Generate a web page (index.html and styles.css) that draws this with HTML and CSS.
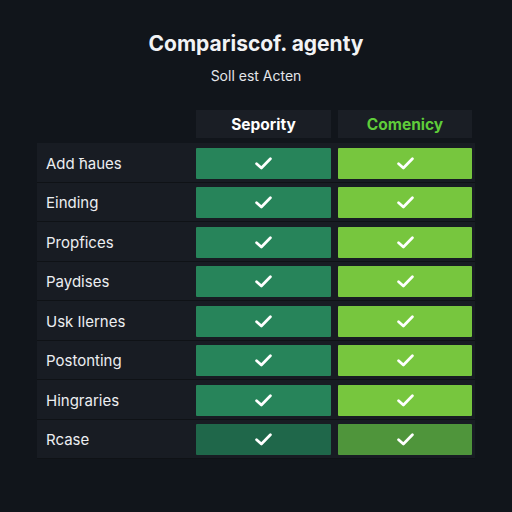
FILE: index.html
```html
<!DOCTYPE html>
<html lang="en">
<head>
    <meta charset="UTF-8">
    <meta name="viewport" content="width=device-width, initial-scale=1.0">
    <title>Comparison</title>
    <link rel="stylesheet" href="styles.css">
</head>
<body>
    <div class="page">
        <h1 class="title">Compariscof. agenty</h1>
        <p class="subtitle">Soll est Acten</p>

        <div class="table">
            <div class="head">
                <div></div>
                <div class="head-cell">Sepority</div>
                <div class="head-cell lime-text">Comenicy</div>
            </div>

            <div class="body">
                <div class="row">
                    <div class="label">Add ħaues</div>
                    <div class="cell green"><svg class="check" viewBox="0 0 16 12"><path d="M1.5 6.2 L6 10.2 L14.5 1.6"/></svg></div>
                    <div class="cell lime"><svg class="check" viewBox="0 0 16 12"><path d="M1.5 6.2 L6 10.2 L14.5 1.6"/></svg></div>
                </div>
                <div class="row">
                    <div class="label">Einding</div>
                    <div class="cell green"><svg class="check" viewBox="0 0 16 12"><path d="M1.5 6.2 L6 10.2 L14.5 1.6"/></svg></div>
                    <div class="cell lime"><svg class="check" viewBox="0 0 16 12"><path d="M1.5 6.2 L6 10.2 L14.5 1.6"/></svg></div>
                </div>
                <div class="row">
                    <div class="label">Propfices</div>
                    <div class="cell green"><svg class="check" viewBox="0 0 16 12"><path d="M1.5 6.2 L6 10.2 L14.5 1.6"/></svg></div>
                    <div class="cell lime"><svg class="check" viewBox="0 0 16 12"><path d="M1.5 6.2 L6 10.2 L14.5 1.6"/></svg></div>
                </div>
                <div class="row">
                    <div class="label">Paydises</div>
                    <div class="cell green"><svg class="check" viewBox="0 0 16 12"><path d="M1.5 6.2 L6 10.2 L14.5 1.6"/></svg></div>
                    <div class="cell lime"><svg class="check" viewBox="0 0 16 12"><path d="M1.5 6.2 L6 10.2 L14.5 1.6"/></svg></div>
                </div>
                <div class="row">
                    <div class="label">Usk Ilernes</div>
                    <div class="cell green"><svg class="check" viewBox="0 0 16 12"><path d="M1.5 6.2 L6 10.2 L14.5 1.6"/></svg></div>
                    <div class="cell lime"><svg class="check" viewBox="0 0 16 12"><path d="M1.5 6.2 L6 10.2 L14.5 1.6"/></svg></div>
                </div>
                <div class="row">
                    <div class="label">Postonting</div>
                    <div class="cell green"><svg class="check" viewBox="0 0 16 12"><path d="M1.5 6.2 L6 10.2 L14.5 1.6"/></svg></div>
                    <div class="cell lime"><svg class="check" viewBox="0 0 16 12"><path d="M1.5 6.2 L6 10.2 L14.5 1.6"/></svg></div>
                </div>
                <div class="row">
                    <div class="label">Hingraries</div>
                    <div class="cell green"><svg class="check" viewBox="0 0 16 12"><path d="M1.5 6.2 L6 10.2 L14.5 1.6"/></svg></div>
                    <div class="cell lime"><svg class="check" viewBox="0 0 16 12"><path d="M1.5 6.2 L6 10.2 L14.5 1.6"/></svg></div>
                </div>
                <div class="row">
                    <div class="label">Rcase</div>
                    <div class="cell green dim"><svg class="check" viewBox="0 0 16 12"><path d="M1.5 6.2 L6 10.2 L14.5 1.6"/></svg></div>
                    <div class="cell lime dim"><svg class="check" viewBox="0 0 16 12"><path d="M1.5 6.2 L6 10.2 L14.5 1.6"/></svg></div>
                </div>
            </div>
        </div>
    </div>
</body>
</html>
```

FILE: styles.css
```css
body {
    margin: 0;
    background-color: #11151b;
    font-family: 'Inter', 'Open Sans', sans-serif;
    color: #f2f3f5;
}

.page {
    width: 512px;
    height: 512px;
    padding-top: 30px;
    box-sizing: border-box;
}

.title {
    margin: 0;
    font-size: 21px;
    font-weight: 700;
    text-align: center;
    line-height: 28px;
}

.subtitle {
    margin: 9px 0 0 0;
    font-size: 14px;
    text-align: center;
    line-height: 17px;
    color: #e4e6ea;
}

.table {
    margin: 26px 0 0 37px;
    width: 438px;
}

.head,
.row {
    display: grid;
    grid-template-columns: 152px 135px 134px;
    column-gap: 7px;
    padding-right: 3px;
}

.head {
    height: 28px;
    margin-bottom: 5px;
}

.head-cell {
    background-color: #1a1e25;
    display: flex;
    align-items: center;
    justify-content: center;
    font-size: 15.5px;
    font-weight: 700;
    color: #ffffff;
}

.lime-text {
    color: #5fcd3a;
}

.body {
    background-color: #0f1216;
}

.row {
    height: 39.5px;
    box-sizing: border-box;
    padding-top: 4.5px;
    padding-bottom: 3px;
    border-bottom: 1px solid #0f1216;
    background-color: #181c23;
}

.label {
    display: flex;
    align-items: center;
    padding-left: 9px;
    font-size: 15px;
    color: #eceef1;
}

.cell {
    display: flex;
    align-items: center;
    justify-content: center;
    border-radius: 1px;
}

.green {
    background-color: #27845a;
}

.lime {
    background-color: #77c63e;
}

.green.dim {
    background-color: #1f674a;
}

.lime.dim {
    background-color: #4f953b;
}

.check {
    width: 17px;
    height: 13px;
    fill: none;
    stroke: #ffffff;
    stroke-width: 2.6;
    stroke-linecap: round;
    stroke-linejoin: round;
}
```
